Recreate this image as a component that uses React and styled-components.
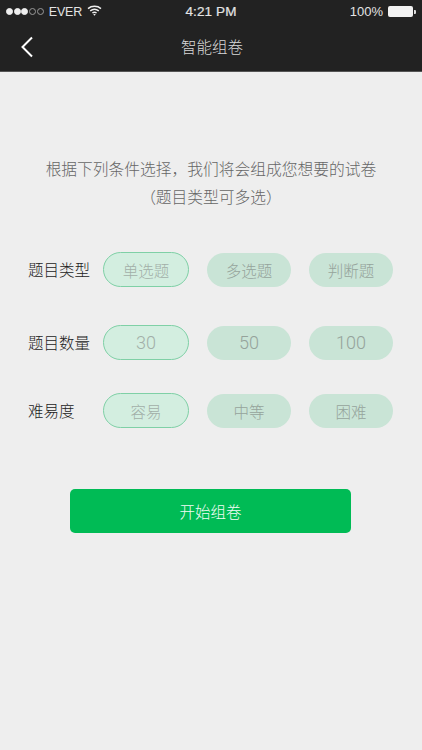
import React from 'react';
import styled, { createGlobalStyle } from 'styled-components';

const FONT = '"Noto Sans CJK SC", "Liberation Sans", sans-serif';

const Global = createGlobalStyle`
  html, body { margin: 0; padding: 0; background: #eeeeee; }
  * { box-sizing: border-box; }
`;
const Screen = styled.div`
  width: 422px; height: 750px; background: #eeeeee; overflow: hidden;
  font-family: ${FONT};
  display: flex; flex-direction: column;
`;
const Header = styled.header`
  height: 72px; background: #222222; color: #fff;
  border-bottom: 1px solid #555;
  display: flex; flex-direction: column;
`;
const StatusBar = styled.div`
  height: 23px; padding: 0 6px 0 6px;
  display: grid; grid-template-columns: 1fr auto 1fr; align-items: center;
  font-family: "Liberation Sans", sans-serif; font-size: 13px; color: #e4e4e4;
`;
const StatusLeft = styled.div`display: flex; align-items: center; gap: 5px;`;
const Carrier = styled.span`font-size: 12.5px; letter-spacing: -.2px;`;
const StatusRight = styled.div`display: flex; align-items: center; justify-content: flex-end; gap: 5px;`;
const Clock = styled.div`font-size: 13.5px; letter-spacing: .1px; -webkit-text-stroke: .2px #e4e4e4;`;
const NavBar = styled.div`
  position: relative; flex: 1; display: flex; align-items: center; justify-content: center;
  padding-bottom: 1px;
`;
const Title = styled.h1`margin: 0 0 0 2px; font-size: 15.5px; font-weight: 300; color: #d8d8d8; line-height: 1;`;
const Back = styled.svg`position: absolute; left: 20px; top: 13px;`;
const Main = styled.main`
  flex: 1; display: flex; flex-direction: column; padding-top: 83px;
`;
const Intro = styled.p`
  margin: 0 0 41px; text-align: center; font-size: 15.75px; font-weight: 300; line-height: 28px; color: #666666;
`;
const Row = styled.div`
  display: flex; align-items: center; padding-left: 28px; height: 35px;
  margin-top: ${p => p.$top}px;
`;
const Label = styled.div`
  width: 75px; font-size: 15.5px; font-weight: 300; line-height: 1; color: #222222; white-space: nowrap;
`;
const Pills = styled.div`display: grid; grid-template-columns: 86px 84px 84px; column-gap: 18px; align-items: center;`;
const Pill = styled.div`
  height: ${p => p.$on ? 35 : 34}px; border-radius: 18px;
  display: flex; align-items: center; justify-content: center;
  background: ${p => p.$on ? '#d3eee0' : '#c9e4d6'};
  border: ${p => p.$on ? '1.5px solid #7fd0a6' : 'none'};
  color: ${p => p.$on ? '#a2aea8' : '#95a39b'};
  font-size: ${p => p.$num ? 18 : 15.5}px;
  font-family: ${p => p.$num ? 'Roboto, "Liberation Sans", sans-serif' : FONT};
  font-weight: 300;
`;
const Start = styled.button`
  display: block; width: 281px; height: 44px; margin: 61px 0 0 70px; border: 0; border-radius: 5px;
  background: #00bb55; color: #f2fbf6; font: 300 15.5px ${FONT}; padding: 0;
`;

const Dot = styled.span`
  width: 7px; height: 7px; border-radius: 50%;
  background: ${p => p.$on ? '#eee' : 'transparent'};
  border: 1px solid ${p => p.$on ? '#eee' : '#999'};
`;
const Dots = styled.span`display: flex; gap: .7px;`;
const Battery = styled.span`display: flex; align-items: center; gap: 1px;`;
const BatteryBody = styled.span`width: 25px; height: 11px; background: #f2f2f2; border-radius: 2px;`;
const BatteryTip = styled.span`width: 2px; height: 4px; background: #ddd; border-radius: 0 1px 1px 0;`;

const rows = [
  { label: '题目类型', top: 0, items: ['单选题', '多选题', '判断题'] },
  { label: '题目数量', top: 38, items: ['30', '50', '100'], num: true },
  { label: '难易度', top: 33, items: ['容易', '中等', '困难'] },
];

export default function App() {
  return (
    <Screen>
      <Global />
      <Header>
        <StatusBar>
          <StatusLeft>
            <Dots>
              <Dot $on /><Dot $on /><Dot $on /><Dot /><Dot />
            </Dots>
            <Carrier>EVER</Carrier>
            <svg width="15" height="11" viewBox="0 0 15 11" fill="none" stroke="#eee" strokeWidth="1.4" style={{ marginTop: -2 }}>
              <path d="M1 3.6C4.6.5 10.4.5 14 3.6" />
              <path d="M3.2 5.9c2.5-2 6.1-2 8.6 0" />
              <path d="M5.4 8c1.3-1 2.9-1 4.2 0" />
              <path d="M7.5 10.8 6.3 9.4c.7-.4 1.7-.4 2.4 0z" fill="#eee" stroke="none" />
            </svg>
          </StatusLeft>
          <Clock>4:21 PM</Clock>
          <StatusRight>
            <span>100%</span>
            <Battery><BatteryBody /><BatteryTip /></Battery>
          </StatusRight>
        </StatusBar>
        <NavBar>
          <Back width="14" height="22" viewBox="0 0 14 22" fill="none" stroke="#fff" strokeWidth="2">
            <path d="M12 1.5 2.5 11 12 20.5" />
          </Back>
          <Title>智能组卷</Title>
        </NavBar>
      </Header>
      <Main>
        <Intro>根据下列条件选择，我们将会组成您想要的试卷<br />（题目类型可多选）</Intro>
        {rows.map(r => (
          <Row key={r.label} $top={r.top}>
            <Label>{r.label}</Label>
            <Pills>
              {r.items.map((t, i) => <Pill key={t} $on={i === 0} $num={r.num}>{t}</Pill>)}
            </Pills>
          </Row>
        ))}
        <Start>开始组卷</Start>
      </Main>
    </Screen>
  );
}
